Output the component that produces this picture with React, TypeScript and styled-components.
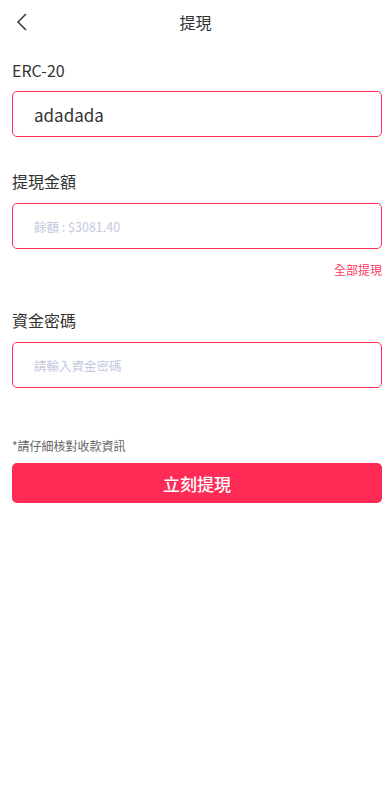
import React from "react";
import styled, { createGlobalStyle } from "styled-components";

const Global = createGlobalStyle`
  html, body { margin: 0; padding: 0; background: #fff; }
  body { font-family: "Noto Sans CJK TC", "Noto Sans", sans-serif; color: #333; }
  * { box-sizing: border-box; }
`;

const Page = styled.div`
  width: 391px;
  min-height: 796px;
  background: #fff;
`;

const Header = styled.header`
  position: relative;
  height: 44px;
  display: flex;
  align-items: center;
  justify-content: center;
`;

const Back = styled.button`
  position: absolute;
  left: 10px;
  top: 9px;
  width: 24px;
  height: 26px;
  padding: 0;
  border: none;
  background: transparent;
  display: flex;
  align-items: center;
  justify-content: center;
`;

const Title = styled.h1`
  margin: 0;
  font-size: 16px;
  font-weight: 400;
  color: #333;
`;

const Body = styled.main`
  padding: 0 9px 0 12px;
  display: flex;
  flex-direction: column;
`;

const Label = styled.div<{ $top: number }>`
  margin-top: ${(p) => p.$top}px;
  height: 24px;
  font-size: 16px;
  line-height: 24px;
  color: #333;
`;

const Field = styled.div<{ $top?: number }>`
  margin-top: ${(p) => p.$top ?? 13}px;
  height: 46px;
  border: 1px solid #ff2d55;
  border-radius: 5px;
  display: flex;
  align-items: center;
  padding-left: 21px;
`;

const Value = styled.span`
  font-size: 17px;
  color: #333;
`;

const Placeholder = styled.span`
  font-size: 12.5px;
  color: #c3c9dc;
`;

const AllLink = styled.div`
  align-self: flex-end;
  margin-top: 13px;
  height: 16px;
  font-size: 12px;
  line-height: 16px;
  color: #ff3a64;
`;

const Note = styled.div`
  margin-top: 50px;
  height: 16px;
  font-size: 12px;
  line-height: 16px;
  color: #666;
`;

const Submit = styled.button`
  margin-top: 9px;
  height: 40px;
  width: 100%;
  border: none;
  border-radius: 5px;
  background: #ff2a55;
  color: #fff;
  font-family: inherit;
  font-size: 17px;
  font-weight: 500;
`;

export default function App() {
  return (
    <Page>
      <Global />
      <Header>
        <Back aria-label="back">
          <svg width="12" height="18" viewBox="0 0 12 18">
            <path d="M10 1 L2 9 L10 17" fill="none" stroke="#333" strokeWidth="1.5" />
          </svg>
        </Back>
        <Title>提現</Title>
      </Header>
      <Body>
        <Label $top={14}>ERC-20</Label>
        <Field $top={9}>
          <Value>adadada</Value>
        </Field>
        <Label $top={32}>提現金額</Label>
        <Field $top={10}>
          <Placeholder>餘額 : $3081.40</Placeholder>
        </Field>
        <AllLink>全部提現</AllLink>
        <Label $top={30}>資金密碼</Label>
        <Field $top={10}>
          <Placeholder>請輸入資金密碼</Placeholder>
        </Field>
        <Note>*請仔細核對收款資訊</Note>
        <Submit>立刻提現</Submit>
      </Body>
    </Page>
  );
}
